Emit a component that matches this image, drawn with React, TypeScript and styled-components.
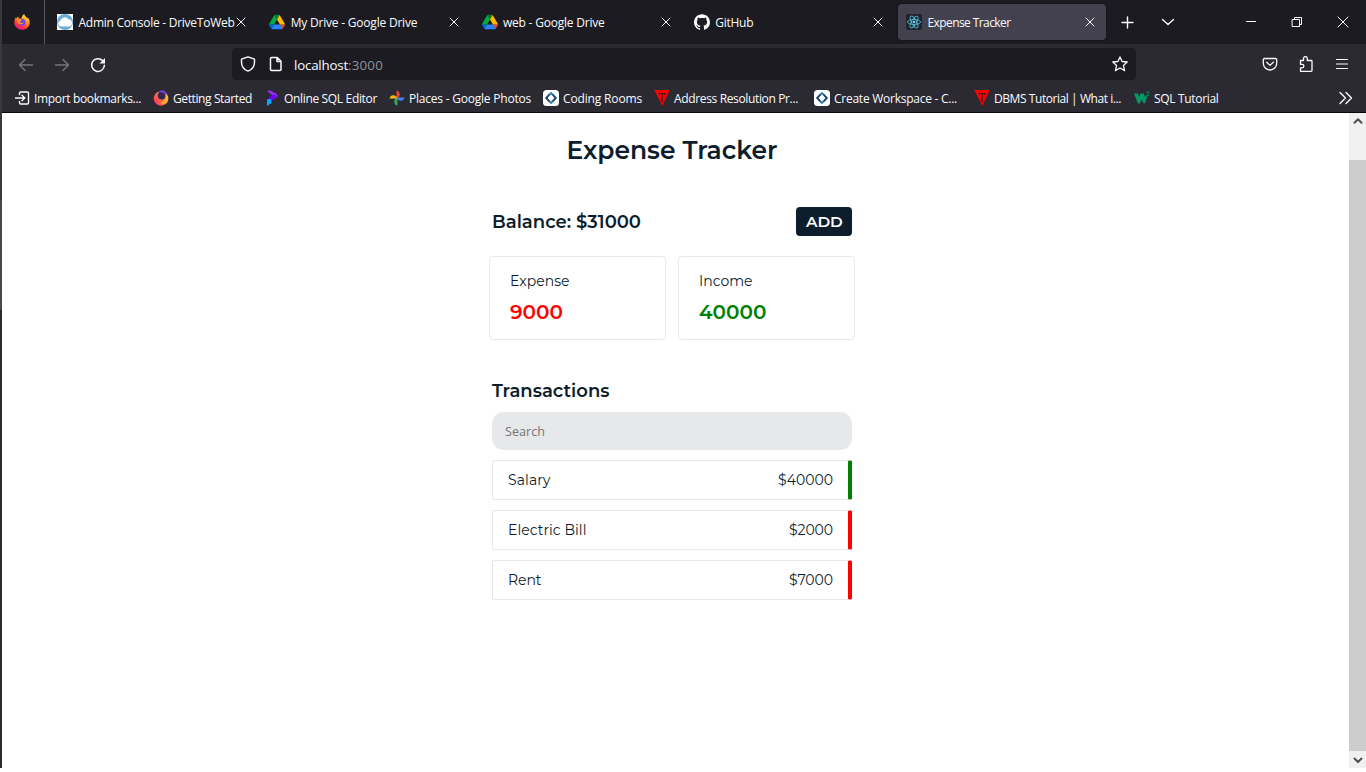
import React, { useLayoutEffect, useRef, useState } from "react";
import styled, { createGlobalStyle } from "styled-components";
import { SiGithub } from "react-icons/si";

const Global = createGlobalStyle`
  * { box-sizing: border-box; }
  html, body { margin: 0; background: #fff; overflow: hidden; }
  svg { display: block; flex: none; }
`;

const Label = styled.span`
  display: block;
  white-space: pre;
  flex: none;
`;

/* Spreads a label's letters so that it fills the width reserved for it. */
function Fit({ width, children }: { width: number; children: string }) {
  const ref = useRef<HTMLSpanElement>(null);
  const [spacing, setSpacing] = useState(0);
  useLayoutEffect(() => {
    const range = document.createRange();
    range.selectNodeContents(ref.current!);
    const natural = range.getBoundingClientRect().width;
    setSpacing((width - natural) / children.length);
  }, []);
  return (
    <Label ref={ref} style={{ width, letterSpacing: spacing }}>
      {children}
    </Label>
  );
}

const Screen = styled.div`
  width: 1366px;
  height: 768px;
  display: flex;
  background: #fff;
`;
const Edge = styled.div`
  width: 2px;
  background: linear-gradient(#39383b 0 200px, #4a4a4a 200px 310px, #2b2b2b 310px);
`;
const Browser = styled.div`
  flex: 1;
  display: flex;
  flex-direction: column;
  min-width: 0;
  font-family: "Open Sans", "Noto Sans", sans-serif;
  font-size: 12px;
  color: #fbfbfe;
`;
const TabBar = styled.div`
  height: 44px;
  background: #1c1b22;
  display: flex;
  align-items: center;
`;
const Pinned = styled.div`
  width: 43px;
  height: 44px;
  padding-left: 12px;
  display: flex;
  align-items: center;
  border-right: 1px solid #5a5961;
`;
const Tabs = styled.div`
  display: flex;
  gap: 4px;
  padding-left: 4px;
`;
const TabBox = styled.div<{ $active?: boolean }>`
  width: 208.25px;
  height: 36px;
  border-radius: 4px;
  padding: 0 10px 0 8px;
  display: flex;
  align-items: center;
  gap: 5.5px;
  background: ${(p) => (p.$active ? "#42414d" : "transparent")};
  box-shadow: ${(p) => (p.$active ? "0 0 3px rgba(0,0,0,.5)" : "none")};
`;
const TabTitle = styled.div`
  flex: 1;
  min-width: 0;
  line-height: 16px;
  padding-top: 1px;
`;
const TabTools = styled.div`
  display: flex;
  align-items: center;
  gap: 24px;
  padding-left: 14px;
`;
const WindowTools = styled.div`
  margin-left: auto;
  display: flex;
  align-items: center;
  gap: 34px;
  padding-right: 17px;
`;
const NavBar = styled.div`
  height: 40px;
  background: #2b2a33;
  display: flex;
  align-items: center;
  padding: 0 16px;
`;
const NavButtons = styled.div`
  display: flex;
  gap: 20px;
  width: 214px;
  padding-top: 1px;
`;
const UrlBar = styled.div`
  width: 904px;
  height: 32px;
  border-radius: 4px;
  background: #1c1b22;
  display: flex;
  align-items: center;
  padding: 0 8px;
  gap: 12px;
`;
const Address = styled.div`
  display: flex;
  flex: 1;
  font-size: 13.3px;
  line-height: 18px;
  margin-left: -2px;
  padding-top: 2px;
`;
const Port = styled.span`
  color: #92919a;
`;
const NavActions = styled.div`
  margin-left: auto;
  display: flex;
  gap: 20px;
`;
const Bookmarks = styled.div`
  height: 29px;
  background: #2b2a33;
  border-bottom: 1px solid #08080a;
  display: flex;
  align-items: center;
  gap: 12px;
  padding: 0 12px;
`;
const Bookmark = styled.div<{ $shift?: number }>`
  display: flex;
  align-items: center;
  gap: 4px;
  line-height: 16px;
  margin-left: ${(p) => p.$shift || 0}px;
`;
const BookmarkTitle = styled.div`
  padding-top: 1px;
`;
const More = styled.div`
  margin-left: auto;
`;
const Viewport = styled.div`
  flex: 1;
  display: flex;
  background: #fff;
`;
const Page = styled.main`
  flex: 1;
  display: flex;
  flex-direction: column;
  align-items: center;
  padding: 20px 7px 0 0;
  color: #0d1d2c;
  font-family: Montserrat, Inter, sans-serif;
`;
const Heading = styled.h1`
  margin: 0;
  font-size: 25px;
  font-weight: 600;
  line-height: 34px;
`;
const Content = styled.div`
  width: 360px;
  margin-top: 40px;
  display: flex;
  flex-direction: column;
`;
const BalanceRow = styled.div`
  display: flex;
  justify-content: space-between;
  align-items: center;
  font-size: 18px;
  font-weight: 600;
  line-height: 24px;
`;
const AddButton = styled.button`
  width: 56px;
  height: 29px;
  padding: 0 10px;
  border: 0;
  border-radius: 4px;
  background: #0d1d2c;
  color: #fff;
  font: 600 15.4px/20px Montserrat, Inter, sans-serif;
  text-align: left;
`;
const Cards = styled.div`
  display: flex;
  gap: 12px;
  margin: 20px -3px 0;
`;
const Card = styled.div`
  width: 177px;
  height: 84px;
  border: 1px solid #e6e8e9;
  border-radius: 4px;
  padding: 15px 20px;
  font-size: 14px;
  line-height: 18px;
`;
const Amount = styled.div<{ $kind: string }>`
  margin-top: 10px;
  font-size: 20px;
  font-weight: 600;
  line-height: 24px;
  color: ${(p) => p.$kind};
`;
const SubHeading = styled.h2`
  margin: 39px 0 9px;
  font-size: 18px;
  font-weight: 600;
  line-height: 24px;
`;
const Search = styled.div`
  height: 38px;
  border-radius: 12px;
  background: #e6e8e9;
  color: #757575;
  padding: 11px 13px;
  font: 12.6px/18px "Open Sans", sans-serif;
`;
const Transaction = styled.div<{ $kind: string }>`
  height: 40px;
  margin-top: 10px;
  border: 1px solid #e6e8e9;
  border-right: 4px solid ${(p) => p.$kind};
  border-radius: 2px;
  padding: 0 15px;
  display: flex;
  align-items: center;
  justify-content: space-between;
  font-size: 14px;
  line-height: 20px;
`;
const Scrollbar = styled.div`
  width: 17px;
  background: #f0f0f0;
  display: flex;
  flex-direction: column;
  justify-content: space-between;
  align-items: center;
`;
const Arrow = styled.div`
  height: 17px;
  display: flex;
  align-items: center;
`;
const Thumb = styled.div`
  width: 17px;
  height: 591px;
  margin-top: 30px;
  background: #cdcdcd;
`;

const Firefox = ({ size = 16 }) => (
  <svg width={size} height={size} viewBox="0 0 16 16">
    <defs>
      <linearGradient id="fx" x1=".8" y1="0" x2=".25" y2="1">
        <stop offset="0" stopColor="#fff44f" />
        <stop offset=".4" stopColor="#ff980e" />
        <stop offset=".72" stopColor="#ff3647" />
        <stop offset="1" stopColor="#e31587" />
      </linearGradient>
    </defs>
    <path fill="url(#fx)" d="M10.3 0c.1 1.4 1 2.2 2.2 3.2.5.4.8.9 1 1.4l.2-1c1.300 1.400 2 3.100 2 4.800 0 4.200-3.400 7.400-7.700 7.400S.3 12.500.3 8.300c0-2 .6-3.700 1.700-5.200l.4 1.300c.5-.8 1.100-1.500 1.900-1.900 0 .9.300 1.500.7 1.900h2.400C8 2.500 8.800 1 10.300 0z" />
    <circle cx="8" cy="8.200" r="3.500" fill="#7542e5" />
    <path fill="#ff9a1f" d="M3.300 5.800c1.600-.9 3.300-.9 4.800.1-.5.900-1.600 1.100-2.500 1.500.4 1.600 2.600 2 4 1-.5 2.400-4.600 2.700-5.800.3-.4-.8-.6-1.900-.5-2.900z" />
  </svg>
);
const FirefoxBall = () => (
  <svg width="16" height="16" viewBox="0 0 16 16">
    <defs>
      <linearGradient id="fb" x1="1" y1=".2" x2=".1" y2=".8">
        <stop offset="0" stopColor="#ffd43a" />
        <stop offset=".5" stopColor="#ff7139" />
        <stop offset="1" stopColor="#ff3b62" />
      </linearGradient>
    </defs>
    <path fill="url(#fb)" d="M4.500 2A7.300 7.300 0 1 0 15.200 7C14.600 4.500 13 2.500 11 2z" />
    <circle cx="8.800" cy="5.600" r="4" fill="#33264f" />
    <path fill="#7542e5" d="M5 1.200C9-.8 14.200 1 15 6.200 12.500 3 9 2.600 5 1.200z" />
    <path fill="#ffb03a" d="M12.200 3.500c3.600 2.500 3.200 7.700.9 9.800-2.600.8-4.500.3-5.600-.6 3.800-.6 6-4 4.700-9.200z" />
  </svg>
);
const Cloud = () => (
  <svg width="16" height="16" viewBox="0 0 16 16">
    <path fill="#fff" d="M0 0h16v16H0z" />
    <circle cx="8" cy="8" r="8" fill="#6bacd5" />
    <path fill="#fff" d="M4 12.500a3 3 0 0 1-.6-5.900 4.500 4.500 0 0 1 8-1.300 3.700 3.700 0 0 1 1.100 7.200z" />
  </svg>
);
const Drive = () => (
  <svg width="16" height="16" viewBox="0 0 87.300 78">
    <path d="m6.600 66.850 3.850 6.650c.8 1.400 1.950 2.500 3.300 3.300l13.750-23.800h-27.500c0 1.550.4 3.100 1.200 4.500z" fill="#0066da" />
    <path d="m43.650 25-13.750-23.800c-1.350.8-2.500 1.900-3.300 3.300l-25.400 44a9.060 9.060 0 0 0-1.200 4.500h27.500z" fill="#00ac47" />
    <path d="m73.550 76.800c1.350-.8 2.500-1.900 3.300-3.300l7.650-13.250c.8-1.400 1.200-2.950 1.200-4.500v-2.750h-27.500l5.850 11.500z" fill="#ea4335" />
    <path d="m43.650 25 13.750-23.800c-1.350-.8-2.900-1.200-4.500-1.200h-18.500c-1.600 0-3.150.45-4.500 1.200z" fill="#00832d" />
    <path d="m59.800 53h-32.300l-13.750 23.800c1.350.8 2.900 1.200 4.500 1.200h50.800c1.600 0 3.150-.45 4.500-1.200z" fill="#2684fc" />
    <path d="m73.400 26.500-12.700-22c-.8-1.400-1.950-2.500-3.300-3.300l-13.750 23.800 16.150 28h27.450c0-1.550-.4-3.100-1.200-4.500z" fill="#ffba00" />
  </svg>
);
const ReactLogo = () => (
  <svg width="16" height="16" viewBox="0 0 16 16">
    <rect width="16" height="16" rx="2" fill="#20232a" />
    <g fill="none" stroke="#53b5d0" strokeWidth=".9">
      <ellipse cx="8" cy="8" rx="6.600" ry="2.500" />
      <ellipse cx="8" cy="8" rx="6.600" ry="2.500" transform="rotate(60 8 8)" />
      <ellipse cx="8" cy="8" rx="6.600" ry="2.500" transform="rotate(120 8 8)" />
    </g>
    <circle cx="8" cy="8" r="1.300" fill="#61dafb" />
  </svg>
);
const Stroke = ({ d, w = 16, h = 16, sw = 1.2, color = "#fbfbfe", fill = "none" }: any) => (
  <svg width={w} height={h} viewBox={`0 0 ${w} ${h}`} fill={fill} stroke={color} strokeWidth={sw} strokeLinecap="round" strokeLinejoin="round">
    <path d={d} />
  </svg>
);
const Close = () => <Stroke w={12} h={12} sw={1} d="M2 2l8 8M10 2L2 10" />;
const Reload = () => (
  <svg width="16" height="16" viewBox="0 0 16 16" fill="none" stroke="#fbfbfe" strokeWidth="1.500">
    <path d="M12.600 3.600A6.400 6.400 0 1 0 14.400 8.300" strokeLinecap="round" />
    <path d="M15 1v5.500H9.500z" fill="#fbfbfe" stroke="none" />
  </svg>
);
const ImportIcon = () => (
  <Stroke sw={1.4} d="M5.500 4.500V3.200c0-.7.500-1.200 1.200-1.200h6.600c.7 0 1.200.5 1.200 1.200v9.600c0 .7-.5 1.200-1.200 1.200H6.700c-.7 0-1.200-.5-1.200-1.200v-1.300M1.500 8h9M8 5.200L10.800 8 8 10.800" />
);
const Prisma = () => (
  <svg width="16" height="16" viewBox="0 0 16 16">
    <path fill="#9a2cff" d="M3 1L6 .2l6.200 3.600c1.600 1 1.600 2.800 0 3.800L10 9 8.500 5.600z" />
    <path fill="#6a00f4" d="M9 4.500l3.500 1.300c0 .8-.3 1.300-.8 1.700L7.500 11 3 9.500z" />
    <path fill="#06a6ff" d="M3 9.300L7.300 9v4.300L3 16z" />
  </svg>
);
const Photos = () => (
  <svg width="16" height="16" viewBox="0 0 16 16">
    <path fill="#ea4335" d="M7.500.5a4 4 0 0 1 .6 7.700H7.500z" />
    <path fill="#4285f4" d="M15.500 7.500a4 4 0 0 1-7.700.6V7.500z" />
    <path fill="#34a853" d="M8.500 15.500a4 4 0 0 1-.6-7.700H8.500z" />
    <path fill="#fbbc04" d="M.5 8.500a4 4 0 0 1 7.700-.6V8.500z" />
  </svg>
);
const Coding = () => (
  <svg width="16" height="16" viewBox="0 0 16 16">
    <rect width="16" height="16" rx="3.500" fill="#fff" />
    <path d="M6.800 4.200L3.200 8l3.600 3.800M9.200 4.200L12.800 8l-3.600 3.800" fill="none" stroke="#17456d" strokeWidth="1.900" />
    <path d="M6.500 4.600L8 3l1.500 1.600M6.500 11.400L8 13l1.500-1.600" fill="none" stroke="#2b7ea8" strokeWidth="1.700" />
  </svg>
);
const Triangle = () => (
  <svg width="16" height="16" viewBox="0 0 16 16">
    <path fill="#f00" d="M.3 0h15.500L8.300 16z" />
    <path fill="#48151a" d="M4.500 3h7v2h-1L10 4H8.800v7h.5v.8H6.800V11h.5V4H6l-.5 1h-1z" />
  </svg>
);
const W3 = () => (
  <svg width="16" height="16" viewBox="0 0 16 16">
    <path fill="#059862" d="M0 3.500h4l1.300 3.700L6.400 3.500h3.400l1.400 3.700 1.100-2.700 1.100 1.700-2.300 7H9.700L7.700 9.500l-2 4H4z" />
    <path fill="none" stroke="#059862" strokeWidth=".9" d="M12.700 2h2.300l-1.200 1.500c2.200.2 1.400 3-.9 1.800" />
  </svg>
);

const tabs = [
  { icon: <Cloud />, title: "Admin Console - DriveToWeb", width: 156 },
  { icon: <Drive />, title: "My Drive - Google Drive", width: 126.5 },
  { icon: <Drive />, title: "web - Google Drive", width: 101.5 },
  { icon: <SiGithub size={16} />, title: "GitHub", width: 38 },
  { icon: <ReactLogo />, title: "Expense Tracker", width: 83, active: true },
];
const bookmarks = [
  { icon: <ImportIcon />, title: "Import bookmarks...", width: 107 },
  { icon: <FirefoxBall />, title: "Getting Started", width: 79 },
  { icon: <Prisma />, title: "Online SQL Editor", width: 93 },
  { icon: <Photos />, title: "Places - Google Photos", width: 122 },
  { icon: <Coding />, title: "Coding Rooms", width: 79 },
  { icon: <Triangle />, title: "Address Resolution Pr...", width: 124 },
  { icon: <Coding />, title: "Create Workspace - C...", width: 123, shift: 4 },
  { icon: <Triangle />, title: "DBMS Tutorial | What i...", width: 127, shift: 5 },
  { icon: <W3 />, title: "SQL Tutorial", width: 64.5, shift: 1 },
];
const transactions = [
  { name: "Salary", nameWidth: 42.5, amount: "$40000", amountWidth: 55, kind: "green" },
  { name: "Electric Bill", nameWidth: 78.5, amount: "$2000", amountWidth: 44, kind: "red" },
  { name: "Rent", nameWidth: 33.500, amount: "$7000", amountWidth: 44, kind: "red" },
];

export default function App() {
  return (
    <Screen>
      <Global />
      <Edge />
      <Browser>
        <TabBar>
          <Pinned><Firefox /></Pinned>
          <Tabs>
            {tabs.map((t) => (
              <TabBox key={t.title} $active={t.active}>
                {t.icon}
                <TabTitle><Fit width={t.width}>{t.title}</Fit></TabTitle>
                <Close />
              </TabBox>
            ))}
          </Tabs>
          <TabTools>
            <Stroke sw={1.4} d="M7.500 3v11M2 8.500h11" />
            <Stroke sw={1.4} d="M2.500 5.500L8 10.500l5.500-5" />
          </TabTools>
          <WindowTools>
            <Stroke w={12} h={12} sw={1} d="M1.500 5.500h9" />
            <Stroke w={12} h={12} sw={1} d="M1.500 3.500h7v7h-7zM3.500 3.500v-2h7v7h-2" />
            <Stroke w={12} h={12} sw={1} d="M1 1l10 10M11 1L1 11" />
          </WindowTools>
        </TabBar>
        <NavBar>
          <NavButtons>
            <Stroke color="#76757e" sw={1.3} d="M14.500 8h-13M7 2.500L1.500 8 7 13.500" />
            <Stroke color="#76757e" sw={1.3} d="M1.500 8h13M9 2.500L14.500 8 9 13.500" />
            <Reload />
          </NavButtons>
          <UrlBar>
            <Stroke sw={1.4} d="M8 .8l6.500 2.400v3c0 4-2.200 7.300-6.500 9-4.300-1.700-6.500-5-6.500-9v-3z" />
            <Stroke sw={1.500} d="M3.500 1.500h5.700l3.800 3.800v8.200c0 .6-.4 1-1 1H3.500c-.6 0-1-.4-1-1v-11c0-.6.4-1 1-1zM9 1.500v4h4" />
            <Address>
              <Fit width={54}>localhost</Fit>
              <Port><Fit width={35}>:3000</Fit></Port>
            </Address>
            <Stroke sw={1.3} d="M8 .9l2.100 4.600 5.100.5-3.800 3.400 1.200 5.200L8 12l-4.600 2.600 1.200-5.200L.8 6l5.100-.5z" />
          </UrlBar>
          <NavActions>
            <Stroke sw={1.3} d="M2.500 2.500h11c.7 0 1.200.5 1.200 1.200v3.600a6.700 6.700 0 0 1-13.400 0V3.700c0-.7.5-1.200 1.200-1.200zM4.700 6.200L8 9.400l3.300-3.200" />
            <Stroke sw={1.300} d="M2.500 4.500h3V2.500a1.900 1.900 0 0 1 3.800 0v2h3.900c.5 0 .8.300.8.800v9.200c0 .5-.3.800-.8.800H2.500v-3.500h1.700a1.700 1.700 0 0 0 0-3.400H2.500z" />
            <Stroke sw={1.2} d="M2.500 3.500h11M2.500 8h11M2.500 12.500h11" />
          </NavActions>
        </NavBar>
        <Bookmarks>
          {bookmarks.map((b, i) => (
            <Bookmark key={i} $shift={b.shift}>
              {b.icon}
              <BookmarkTitle><Fit width={b.width}>{b.title}</Fit></BookmarkTitle>
            </Bookmark>
          ))}
          <More><Stroke sw={1.4} d="M2 2.500L7.500 8 2 13.500M8 2.500L13.500 8 8 13.500" /></More>
        </Bookmarks>
        <Viewport>
          <Page>
            <Heading><Fit width={211}>Expense Tracker</Fit></Heading>
            <Content>
              <BalanceRow>
                <Fit width={149}>Balance: $31000</Fit>
                <AddButton><Fit width={36.5}>ADD</Fit></AddButton>
              </BalanceRow>
              <Cards>
                <Card>
                  <Fit width={59.5}>Expense</Fit>
                  <Amount $kind="red"><Fit width={53}>9000</Fit></Amount>
                </Card>
                <Card>
                  <Fit width={53.5}>Income</Fit>
                  <Amount $kind="green"><Fit width={67.5}>40000</Fit></Amount>
                </Card>
              </Cards>
              <SubHeading><Fit width={117.5}>Transactions</Fit></SubHeading>
              <Search><Fit width={40}>Search</Fit></Search>
              {transactions.map((t) => (
                <Transaction key={t.name} $kind={t.kind}>
                  <Fit width={t.nameWidth}>{t.name}</Fit>
                  <Fit width={t.amountWidth}>{t.amount}</Fit>
                </Transaction>
              ))}
            </Content>
          </Page>
          <Scrollbar>
            <Arrow><Stroke w={10} h={10} sw={2} color="#505050" d="M1.500 5.800L5 2.300l3.500 3.500" /></Arrow>
            <Thumb />
            <Arrow><Stroke w={10} h={10} sw={2} color="#505050" d="M1.500 3.500L5 7l3.500-3.500" /></Arrow>
          </Scrollbar>
        </Viewport>
      </Browser>
    </Screen>
  );
}
